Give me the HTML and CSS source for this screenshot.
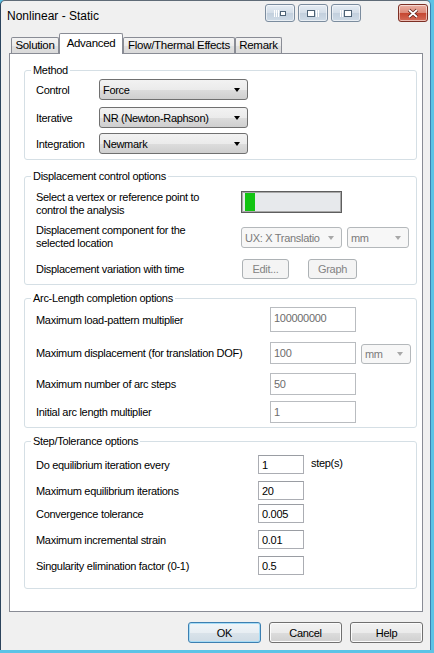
FILE: index.html
```html
<!DOCTYPE html>
<html lang="en">
<head>
<meta charset="UTF-8">
<title>Nonlinear - Static</title>
<link rel="stylesheet" href="styles.css">
</head>
<body>
<div class="window">
  <div class="titlebar">
    <span class="title">Nonlinear - Static</span>
    <div class="caption">
      <span class="cbtn"><svg width="14" height="9" viewBox="0 0 14 9"><path d="M1.5 1v7M3.5 1v7M5.5 1v7" stroke="#fff" stroke-width="1"/><rect x="7.5" y="2.5" width="5" height="4" fill="#fff" stroke="#4d6275"/></svg></span>
      <span class="cbtn"><svg width="14" height="9" viewBox="0 0 14 9"><rect x="1.5" y="1.5" width="7" height="6" fill="#fff" stroke="#4d6275"/><path d="M10.5 1v7M12.5 1v7" stroke="#fff"/></svg></span>
      <span class="cbtn"><svg width="14" height="9" viewBox="0 0 14 9"><path d="M1.5 1v7M3.5 1v7" stroke="#fff"/><rect x="5.5" y="1.5" width="7" height="6" fill="#fff" stroke="#4d6275"/></svg></span>
      <span class="cbtn close"><svg width="14" height="11" viewBox="0 0 14 11"><path d="M3 2l8 7M11 2l-8 7" stroke="#5b1d15" stroke-width="3.4"/><path d="M3 2l8 7M11 2l-8 7" stroke="#fff" stroke-width="1.8"/></svg></span>
    </div>
  </div>

  <div class="tabs">
    <span class="tab t-sol">Solution</span>
    <span class="tab active t-adv">Advanced</span>
    <span class="tab t-flow">Flow/Thermal Effects</span>
    <span class="tab t-rem">Remark</span>
  </div>

  <div class="panel">
    <!-- method -->
    <div class="group g-method">
      <div class="legend">Method</div>
      <div class="row m1"><span class="lbl w1">Control</span><div class="combo c-method"><span class="val">Force</span><span class="arrow"></span></div></div>
      <div class="row m2"><span class="lbl w1">Iterative</span><div class="combo c-method"><span class="val">NR (Newton-Raphson)</span><span class="arrow"></span></div></div>
      <div class="row m3"><span class="lbl w1">Integration</span><div class="combo c-method"><span class="val">Newmark</span><span class="arrow"></span></div></div>
    </div>

    <!-- displacement control -->
    <div class="group g-disp">
      <div class="legend">Displacement control options</div>
      <div class="row top d1">
        <span class="lbl w2 two">Select a vertex or reference point to control the analysis</span>
        <div class="picker"><span></span></div>
      </div>
      <div class="row top d2">
        <span class="lbl w2 two">Displacement component for the selected location</span>
        <div class="combo off c-ux"><span class="val">UX: X Translatio</span><span class="arrow"></span></div>
        <div class="combo off c-mm"><span class="val">mm</span><span class="arrow"></span></div>
      </div>
      <div class="row d3">
        <span class="lbl w2">Displacement variation with time</span>
        <button class="btn off b-edit">Edit...</button>
        <button class="btn off b-graph">Graph</button>
      </div>
    </div>

    <!-- arc length -->
    <div class="group g-arc">
      <div class="legend">Arc-Length completion options</div>
      <div class="row a1"><span class="lbl w3">Maximum load-pattern multiplier</span><div class="field off f-arc tall">100000000</div></div>
      <div class="row a2"><span class="lbl w3">Maximum displacement (for translation DOF)</span><div class="field off f-arc">100</div><div class="combo off c-mm2"><span class="val">mm</span><span class="arrow"></span></div></div>
      <div class="row a3"><span class="lbl w3">Maximum number of arc steps</span><div class="field off f-arc">50</div></div>
      <div class="row a4"><span class="lbl w3">Initial arc length multiplier</span><div class="field off f-arc">1</div></div>
    </div>

    <!-- step / tolerance -->
    <div class="group g-step">
      <div class="legend">Step/Tolerance options</div>
      <div class="row s1"><span class="lbl w4">Do equilibrium iteration every</span><div class="field f-step">1</div><span class="unit">step(s)</span></div>
      <div class="row s2"><span class="lbl w4">Maximum equilibrium iterations</span><div class="field f-step">20</div></div>
      <div class="row s3"><span class="lbl w4">Convergence tolerance</span><div class="field f-step">0.005</div></div>
      <div class="row s4"><span class="lbl w4">Maximum incremental strain</span><div class="field f-step">0.01</div></div>
      <div class="row s5"><span class="lbl w4">Singularity elimination factor (0-1)</span><div class="field f-step">0.5</div></div>
    </div>
  </div>

  <div class="actions">
    <button class="btn default">OK</button>
    <button class="btn">Cancel</button>
    <button class="btn">Help</button>
  </div>
</div>
</body>
</html>
```

FILE: styles.css
```css
*{box-sizing:border-box;}

body{margin:0;width:434px;height:653px;overflow:hidden;background:#5cc3e6;
  font:11px "Liberation Sans",Arial,sans-serif;letter-spacing:-0.3px;color:#000;}

.window{width:431px;height:650px;background:#f0f0f0;display:flex;flex-direction:column;
  border-left:1px solid #2c445c;border-top:1px solid #5f6b77;border-right:1px solid #3d7fb0;
  border-radius:5px 5px 0 0;}

/* title bar */
.titlebar{display:flex;height:32px;flex:none;}
.title{padding:8px 0 0 6px;line-height:14px;font-size:12px;letter-spacing:0;}
.caption{display:flex;gap:3px;margin:3px 2px 0 auto;}
.cbtn{width:30px;height:18px;display:flex;align-items:center;justify-content:center;
  border:1px solid #7b8c9e;border-radius:3px;
  background:linear-gradient(#e6edf4,#d3dde8 50%,#c2cfdd 50%,#cfdbe7);
  box-shadow:inset 0 0 0 1px rgba(255,255,255,.55);}
.cbtn.close{margin-left:34px;border-color:#7c2f24;
  background:linear-gradient(#eab0a4,#dc8877 50%,#c5452f 50%,#d46b58);}

/* tabs */
.tabs{display:flex;align-items:flex-end;height:20px;padding-left:10px;position:relative;z-index:1;flex:none;}
.tab{height:16px;border:1px solid #898c95;border-bottom:none;border-radius:2px 2px 0 0;
  background:linear-gradient(#f3f3f3,#ebebeb 50%,#e0e0e0 50%,#dadada);
  text-align:center;line-height:14px;white-space:nowrap;font-size:11.5px;}
.tab.active{height:21px;margin-bottom:-1px;background:#fff;padding-top:2px;}
.t-sol{width:48px;}
.t-adv{width:64px;}
.t-flow{width:112px;}
.t-rem{width:47px;}

.panel{margin-left:8px;width:414px;height:559px;flex:none;border:1px solid #898c95;background:#fff;
  padding:16px 0 0 14px;}

/* group boxes */
.group{width:393px;border:1px solid #d5dfe5;border-radius:3px;}
.legend{width:max-content;margin:-8px 0 0 6px;padding:0 2px;background:#fff;line-height:14px;}
.g-method{height:90px;}
.g-disp{height:109px;margin-top:16px;}
.g-arc{height:130px;margin-top:13px;}
.g-step{height:148px;margin-top:13px;}

.row{display:flex;align-items:center;padding-left:11px;}
.row.top{align-items:flex-start;}
.lbl{flex:none;line-height:14px;white-space:nowrap;}
.lbl.two{white-space:normal;line-height:13px;padding-right:20px;}
.w1{width:63px;}
.w2{width:205px;}
.w3{width:234px;}
.w4{width:222px;}

.m1{margin-top:2px;}
.m2{margin-top:7px;}
.m3{margin-top:5px;}

.d1{margin-top:8px;}
.d2{margin-top:7px;}
.d3{margin-top:9px;}

.a1{margin-top:2px;}
.a2,.a3{margin-top:9px;}
.a4{margin-top:6px;}

.s1{margin-top:7px;}
.s2,.s4,.s5{margin-top:7px;}
.s3{margin-top:4px;}

/* combo boxes */
.combo{display:flex;align-items:center;height:21px;padding:0 7px 0 3px;white-space:nowrap;overflow:hidden;
  border:1px solid #707070;border-radius:3px;
  background:linear-gradient(#f2f2f2,#ebebeb 50%,#dddddd 50%,#cfcfcf);}
.combo .val{flex:1;overflow:hidden;}
.arrow{flex:none;width:0;height:0;border-left:3.5px solid transparent;border-right:3.5px solid transparent;border-top:4px solid #000;}
.combo.off{background:#f7f7f7;border-color:#b4b8bb;color:#7a7a7a;}
.combo.off .arrow{border-top-color:#a8a8a8;}
.c-method{width:149px;}
.c-ux{width:101px;margin-top:3px;}
.c-mm{width:62px;margin:3px 0 0 5px;}
.c-mm2{width:50px;height:20px;margin:3px 0 0 5px;}

/* point picker */
.picker{width:101px;height:22px;border:1px solid #5e5e5e;box-shadow:inset 0 0 0 1px #a9a9a9;
  background:#e7e9ec;padding:1px 2px;}
.picker span{display:block;width:10px;height:18px;margin-left:1px;background:#12c412;}

/* edit fields */
.field{height:22px;padding:3px 0 0 3px;line-height:14px;background:#fff;
  border:1px solid #abadb3;border-top-color:#9a9da3;}
.field.off{color:#6d6d6d;border-color:#b9bcc0;}
.f-arc{width:86px;}
.f-arc.tall{height:25px;}
.f-step{width:46px;height:19px;padding-top:2px;}
.unit{margin-left:7px;line-height:14px;margin-top:-3px;}

/* buttons */
.btn{font:inherit;letter-spacing:inherit;color:#000;height:21px;padding:0;border:1px solid #707070;border-radius:3px;
  background:linear-gradient(#f2f2f2,#ebebeb 50%,#dddddd 50%,#cfcfcf);
  box-shadow:inset 0 0 0 1px #fbfbfb;}
.btn.off{color:#838383;border-color:#adb2b5;background:#f4f4f4;box-shadow:none;height:20px;}
.b-edit{width:47px;margin-left:1px;}
.b-graph{width:49px;margin-left:19px;}

.actions{display:flex;justify-content:flex-end;gap:8px;margin-top:10px;padding-right:7px;}
.actions .btn{width:73px;}
.btn.default{border-color:#3c7fb1;box-shadow:inset 0 0 0 1px #a6dcf6;
  background:linear-gradient(#f0f5f9,#e8eef3 50%,#dae3ea 50%,#cfdbe5);}
```
